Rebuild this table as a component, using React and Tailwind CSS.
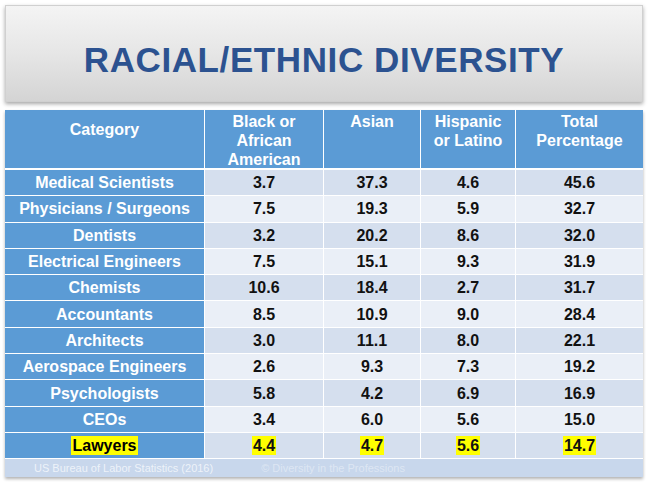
const rows = [
  ['Medical Scientists', '3.7', '37.3', '4.6', '45.6'],
  ['Physicians / Surgeons', '7.5', '19.3', '5.9', '32.7'],
  ['Dentists', '3.2', '20.2', '8.6', '32.0'],
  ['Electrical Engineers', '7.5', '15.1', '9.3', '31.9'],
  ['Chemists', '10.6', '18.4', '2.7', '31.7'],
  ['Accountants', '8.5', '10.9', '9.0', '28.4'],
  ['Architects', '3.0', '11.1', '8.0', '22.1'],
  ['Aerospace Engineers', '2.6', '9.3', '7.3', '19.2'],
  ['Psychologists', '5.8', '4.2', '6.9', '16.9'],
  ['CEOs', '3.4', '6.0', '5.6', '15.0'],
  ['Lawyers', '4.4', '4.7', '5.6', '14.7'],
]

const cols = 'grid grid-cols-[199px_119px_97px_95px_1fr]'

export default function App() {
  return (
    <div className="w-[648px] h-[485px] bg-white px-[5px] pt-[5px] font-['Liberation_Sans',Arial,sans-serif] overflow-hidden">
      {/* title banner */}
      <div className="h-[97px] flex items-center justify-center bg-gradient-to-b from-[#f4f4f4] via-[#e6e6e6] to-[#d4d4d4] shadow-[0_2px_4px_rgba(0,0,0,0.35)] border border-[#d0d0d0]">
        <h1 className="mt-[14px] text-[35px] font-bold tracking-[0.6px] text-[#2c5290]">RACIAL/ETHNIC DIVERSITY</h1>
      </div>

      {/* table */}
      <div className="mt-[8px] shadow-[0_2px_3px_rgba(0,0,0,0.3)] text-[16px] font-bold leading-[19px]">
        <div className={`${cols} h-[60px] bg-[#5b9bd5] text-white border-b-2 border-white`}>
          <div className="pt-[10px] text-center">Category</div>
          <div className="pt-[2px] text-center border-l border-white">Black or<br />African<br />American</div>
          <div className="pt-[2px] text-center border-l border-white">Asian</div>
          <div className="pt-[2px] text-center border-l border-white">Hispanic<br />or Latino</div>
          <div className="pt-[2px] text-center border-l border-white">Total<br />Percentage</div>
        </div>
        {rows.map((r, i) => {
          const last = r[0] === 'Lawyers'
          const bg = i % 2 === 0 ? 'bg-[#d5dfee]' : 'bg-[#eaeff7]'
          return (
            <div key={r[0]} className={`${cols} h-[26.3px] border-b border-white`}>
              <div className="flex items-center justify-center bg-[#5b9bd5] text-white">
                {last ? <span className="bg-[#ffff00] text-black px-[1px]">{r[0]}</span> : r[0]}
              </div>
              {r.slice(1).map((v, j) => (
                <div key={j} className={`flex items-center justify-center border-l border-white text-[#111] ${bg}`}>
                  {last ? <span className="bg-[#ffff00] px-[1px]">{v}</span> : v}
                </div>
              ))}
            </div>
          )
        })}
        <div className="h-[18px] bg-[#c8d7ec] flex items-center text-[11px] font-normal text-white/70">
          <span className="ml-[29px]">US Bureau of Labor Statistics (2016)</span>
          <span className="ml-[48px] text-white/40">© Diversity in the Professions</span>
        </div>
      </div>
    </div>
  )
}
